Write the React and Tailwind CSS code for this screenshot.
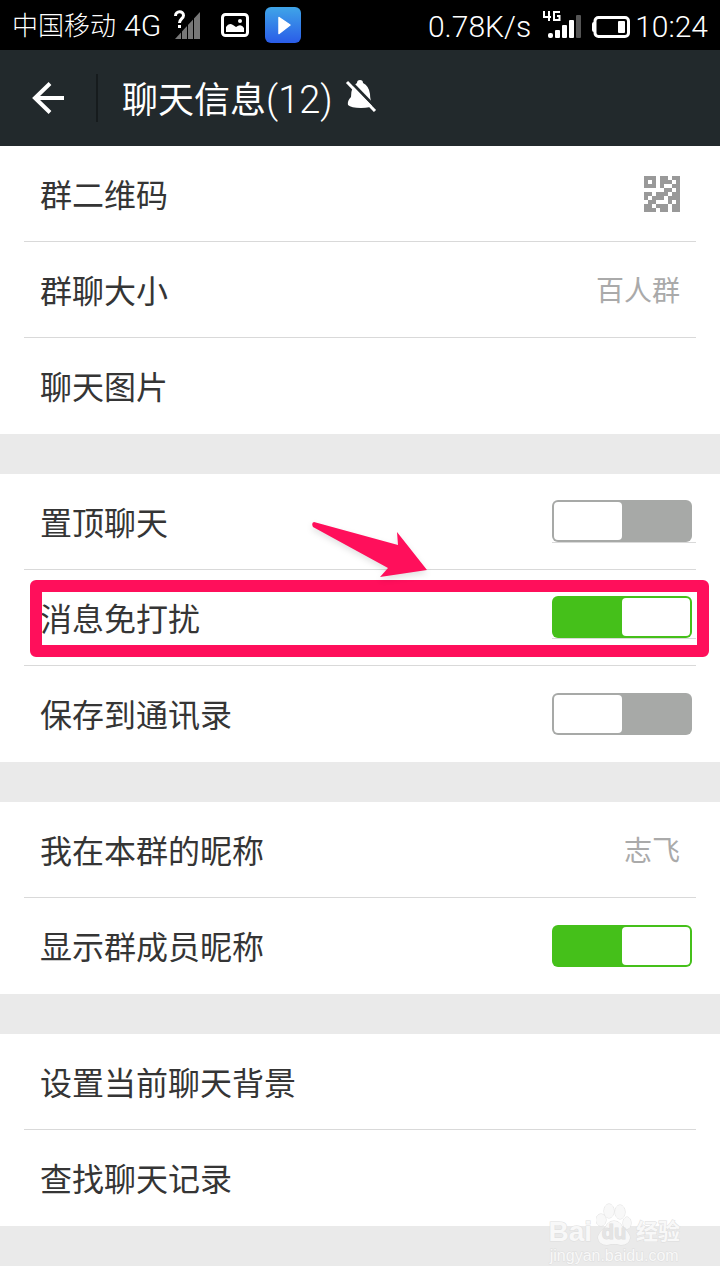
import { useState } from 'react';

const FONT = "font-['Roboto','Noto_Sans_CJK_SC',sans-serif]";

const qrRows = [
  '###.##.##',
  '#.#.###.#',
  '###.#..##',
  '.....##.#',
  '##.###.##',
  '#.###.###',
  '.##...#.#',
  '##.###.##',
  '###.##.##',
];

const groups = [
  [
    { id: 'qr', label: '群二维码', qr: true },
    { id: 'size', label: '群聊大小', value: '百人群' },
    { id: 'images', label: '聊天图片' },
  ],
  [
    { id: 'pin', label: '置顶聊天', on: false, underline: true },
    { id: 'mute', label: '消息免打扰', on: true, underline: true, marked: true },
    { id: 'save', label: '保存到通讯录', on: false },
  ],
  [
    { id: 'nick', label: '我在本群的昵称', value: '志飞' },
    { id: 'names', label: '显示群成员昵称', on: true },
  ],
  [
    { id: 'background', label: '设置当前聊天背景' },
    { id: 'search', label: '查找聊天记录' },
  ],
];

function StatusBar() {
  return (
    <div className="flex h-[50px] items-center justify-between bg-black px-3 text-white">
      <div className="flex items-center">
        <span className="mt-0.5 text-[26px] font-light">中国移动</span>
        <span className="ml-2 text-[30px] font-light">4G</span>
        <svg className="ml-3 h-8 w-7" viewBox="0 0 28 32" aria-hidden="true">
          <path d="M2 30 27 3V30Z" fill="#777" />
          <path d="M8.5 20V30M14.5 12V30M20.5 8V30" stroke="#000" strokeWidth="1" />
          <path d="M2.5 7C2.5 1.5 10.5 1.5 10.5 6.5C10.5 9.5 6.5 10 6.5 14M6.5 16V19" fill="none" stroke="#000" strokeWidth="6" />
          <path d="M2.5 7C2.5 1.5 10.5 1.5 10.5 6.5C10.5 9.5 6.5 10 6.5 14M6.5 16V19" fill="none" stroke="#fff" strokeWidth="3" />
        </svg>
        <svg className="ml-5 h-6 w-7" viewBox="0 0 28 24" aria-hidden="true">
          <rect x="1.5" y="1.5" width="25" height="21" rx="3" fill="none" stroke="#fff" strokeWidth="3" />
          <path d="M5 19V14Q8 9 12 12L15 14Q20 10 23 15V19Z" fill="#fff" />
          <circle cx="19" cy="8" r="2" fill="#fff" />
        </svg>
        <svg className="ml-4 h-9 w-9" viewBox="0 0 36 36" aria-hidden="true">
          <defs>
            <linearGradient id="player" x1="0" y1="0" x2="0" y2="1">
              <stop offset="0" stopColor="#3fa5e8" />
              <stop offset="1" stopColor="#2a5ce8" />
            </linearGradient>
          </defs>
          <rect width="36" height="36" rx="6" fill="url(#player)" />
          <path d="M14 10.5 25 18 14 26.5Z" fill="#fff" stroke="#fff" strokeWidth="1.5" strokeLinejoin="round" />
        </svg>
      </div>
      <div className="flex items-center">
        <span className="mt-0.5 text-[30px] font-light">0.78K/s</span>
        <svg className="ml-3 h-8 w-10" viewBox="0 0 40 32" aria-hidden="true">
          <path d="M1 2V8H8M6 2V12M17 3H11V11H16.5V7H14" fill="none" stroke="#fff" strokeWidth="2" />
          <g fill="#fff">
            <rect x="5" y="24" width="5" height="5" rx="2" />
            <rect x="12" y="21" width="5" height="8" rx="1" />
            <rect x="19" y="16" width="5" height="13" rx="1" />
            <rect x="26" y="11" width="5" height="18" rx="1" />
          </g>
          <rect x="33" y="6" width="5" height="23" rx="1" fill="#555" />
        </svg>
        <svg className="mt-1 ml-2 h-6 w-10" viewBox="0 0 40 24" aria-hidden="true">
          <rect x="4" y="2.5" width="33.5" height="19" rx="3.5" fill="none" stroke="#fff" strokeWidth="3" />
          <rect x="1" y="7" width="4" height="10" rx="2" fill="#fff" />
          <rect x="27" y="6" width="7" height="12" rx="1" fill="#fff" />
        </svg>
        <span className="mt-0.5 ml-1 text-[30px] font-light">10:24</span>
      </div>
    </div>
  );
}

function Header() {
  return (
    <header className="flex h-24 items-center bg-[#22292c] text-white">
      <button type="button" aria-label="返回" className="flex h-12 w-[98px] items-center border-r-2 border-[#161b1d] pl-8">
        <svg className="h-8 w-8" viewBox="0 0 32 32" fill="none" stroke="#fff" strokeWidth="4" aria-hidden="true">
          <path d="M32 16H3M18 1.5 3 16 18 30.5" />
        </svg>
      </button>
      <h1 className="mt-1 ml-6 text-[36px] leading-[48px] font-normal">
        聊天信息<span className="text-[38px] font-light">(12)</span>
      </h1>
      <svg className="mb-1 ml-3 h-8 w-8" viewBox="0 0 32 32" aria-hidden="true">
        <path d="M12 3Q12 0 15 0T18 3Q24 6 25 14Q25 21 28 25Q26 28 16 28T3 25Q2 21 6 17Q6 6 12 3Z" fill="#fff" />
        <path d="M4 0 32 29" stroke="#22292c" strokeWidth="3" />
        <path d="M2 2 30 31" stroke="#fff" strokeWidth="3" />
      </svg>
    </header>
  );
}

function QrIcon() {
  return (
    <svg className="h-9 w-9" viewBox="0 0 9 9" fill="#999" shapeRendering="crispEdges" aria-hidden="true">
      {qrRows.map((row, y) =>
        row.split('').map((cell, x) => (cell === '#' ? <rect key={`${x}-${y}`} x={x} y={y} width="1" height="1" /> : null))
      )}
    </svg>
  );
}

function Toggle({ id, checked, underline, onChange }) {
  return (
    <span className={`mb-1 border-b pr-1 ${underline ? 'border-[#d9d9d9]' : 'border-transparent'}`}>
      <span className="relative flex h-[42px] w-[140px]">
        <input
          id={id}
          type="checkbox"
          role="switch"
          checked={checked}
          onChange={onChange}
          className="peer h-full w-full appearance-none rounded-md bg-[#a7a9a7] checked:bg-[#45c01a]"
        />
        <span className="pointer-events-none absolute inset-y-[2px] left-[2px] w-[68px] rounded-sm bg-white peer-checked:right-[2px] peer-checked:left-auto" />
      </span>
    </span>
  );
}

function Row({ item, last }) {
  const [on, setOn] = useState(item.on);
  const isToggle = item.on !== undefined;

  return (
    <li className={`relative mx-6 flex h-24 items-center justify-between pt-1 pl-4 ${last ? '' : 'border-b border-[#d9d9d9]'}`}>
      {isToggle ? (
        <label htmlFor={item.id} className="text-[32px] leading-[48px]">{item.label}</label>
      ) : (
        <a href={`#${item.id}`} className="text-[32px] leading-[48px]">{item.label}</a>
      )}
      {isToggle && (
        <Toggle id={item.id} checked={on} underline={item.underline} onChange={(e) => setOn(e.target.checked)} />
      )}
      {item.value && <span className="mr-4 text-[28px] text-[#aaa]">{item.value}</span>}
      {item.qr && <span className="mr-4 mb-1"><QrIcon /></span>}
      {item.marked && <Highlight />}
    </li>
  );
}

function Highlight() {
  return (
    <>
      <div className="pointer-events-none absolute -right-[13px] bottom-2 left-[6px] h-[77px] rounded-md border-12 border-[#ff0f5b]" />
      <svg className="pointer-events-none absolute -top-[52px] left-[284px] h-[64px] w-[124px] drop-shadow-md" viewBox="0 0 124 64" aria-hidden="true">
        <path d="M6 4 90 27 89 14 119 52 72 59 80 50 5 9Q3 5 6 4Z" fill="#ff0f5b" />
      </svg>
    </>
  );
}

function Watermark() {
  return (
    <div className="pointer-events-none absolute right-10 bottom-0 flex flex-col items-center font-['Liberation_Sans','Noto_Sans_CJK_SC',sans-serif] text-[#f8f8f8] [-webkit-text-stroke:1px_#dedede] [paint-order:stroke_fill]">
      <div className="flex items-end gap-1 font-bold">
        <span className="text-[28px] leading-7">Bai</span>
        <span className="relative flex h-11 w-9 items-end justify-center">
          <svg className="absolute inset-0 h-full w-full" viewBox="0 0 36 44" fill="#f8f8f8" stroke="#dedede" aria-hidden="true">
            <ellipse cx="5" cy="18" rx="5" ry="6" />
            <ellipse cx="13" cy="9" rx="5" ry="7" />
            <ellipse cx="24" cy="10" rx="5" ry="7" />
            <ellipse cx="31" cy="21" rx="4" ry="6" />
            <path d="M18 19Q24 19 27 26Q34 31 34 36Q33 43 25 43Q18 41 11 43Q3 43 2 36Q2 31 9 26Q12 19 18 19Z" />
          </svg>
          <span className="relative text-xl text-[#e4e4e4]">du</span>
        </span>
        <span className="text-[22px] leading-7">经验</span>
      </div>
      <span className="text-base leading-5">jingyan.baidu.com</span>
    </div>
  );
}

export default function App() {
  return (
    <div className={`${FONT} min-h-screen bg-white text-[#353535]`}>
      <StatusBar />
      <Header />
      <main className="relative">
        {groups.map((items) => (
          <section key={items[0].id} className="border-b-40 border-[#eaeaea]">
            <ul>
              {items.map((item, i) => (
                <Row key={item.id} item={item} last={i === items.length - 1} />
              ))}
            </ul>
          </section>
        ))}
        <Watermark />
      </main>
    </div>
  );
}
